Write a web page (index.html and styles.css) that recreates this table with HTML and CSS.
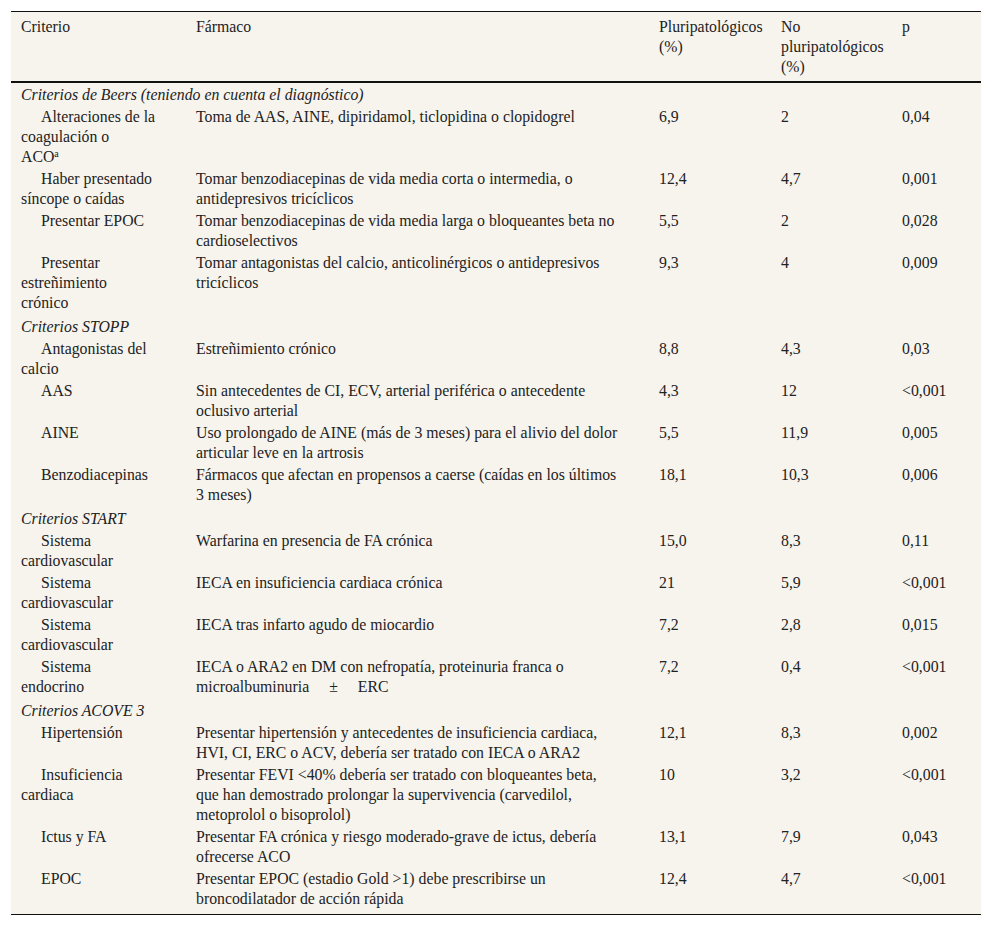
FILE: index.html
```
<!DOCTYPE html>
<html lang="es">
<head>
<meta charset="utf-8">
<title>Tabla</title>
<link rel="stylesheet" href="styles.css">
</head>
<body>
<table class="tbl">
<colgroup>
<col class="c1"><col class="c2"><col class="c3"><col class="c4"><col class="c5">
</colgroup>
<thead>
<tr><th>Criterio</th><th>Fármaco</th><th>Pluripatológicos<br>(%)</th><th>No<br>pluripatológicos<br>(%)</th><th>p</th></tr>
</thead>
<tbody>
<tr class="sec first"><td colspan="5">Criterios de Beers (teniendo en cuenta el diagnóstico)</td></tr>
<tr><td class="ind">Alteraciones de la<br>coagulación o<br>ACO<sup>a</sup></td><td>Toma de AAS, AINE, dipiridamol, ticlopidina o clopidogrel</td><td>6,9</td><td>2</td><td>0,04</td></tr>
<tr><td class="ind">Haber presentado<br>síncope o caídas</td><td>Tomar benzodiacepinas de vida media corta o intermedia, o<br>antidepresivos tricíclicos</td><td>12,4</td><td>4,7</td><td>0,001</td></tr>
<tr><td class="ind">Presentar EPOC</td><td>Tomar benzodiacepinas de vida media larga o bloqueantes beta no<br>cardioselectivos</td><td>5,5</td><td>2</td><td>0,028</td></tr>
<tr><td class="ind">Presentar<br>estreñimiento<br>crónico</td><td>Tomar antagonistas del calcio, anticolinérgicos o antidepresivos<br>tricíclicos</td><td>9,3</td><td>4</td><td>0,009</td></tr>
<tr class="sec"><td colspan="5">Criterios STOPP</td></tr>
<tr><td class="ind">Antagonistas del<br>calcio</td><td>Estreñimiento crónico</td><td>8,8</td><td>4,3</td><td>0,03</td></tr>
<tr><td class="ind">AAS</td><td>Sin antecedentes de CI, ECV, arterial periférica o antecedente<br>oclusivo arterial</td><td>4,3</td><td>12</td><td>&lt;0,001</td></tr>
<tr><td class="ind">AINE</td><td>Uso prolongado de AINE (más de 3 meses) para el alivio del dolor<br>articular leve en la artrosis</td><td>5,5</td><td>11,9</td><td>0,005</td></tr>
<tr><td class="ind">Benzodiacepinas</td><td><span class="nw">Fármacos que afectan en propensos a caerse (caídas en los últimos</span><br>3 meses)</td><td>18,1</td><td>10,3</td><td>0,006</td></tr>
<tr class="sec"><td colspan="5">Criterios START</td></tr>
<tr><td class="ind">Sistema<br>cardiovascular</td><td>Warfarina en presencia de FA crónica</td><td>15,0</td><td>8,3</td><td>0,11</td></tr>
<tr><td class="ind">Sistema<br>cardiovascular</td><td>IECA en insuficiencia cardiaca crónica</td><td>21</td><td>5,9</td><td>&lt;0,001</td></tr>
<tr><td class="ind">Sistema<br>cardiovascular</td><td>IECA tras infarto agudo de miocardio</td><td>7,2</td><td>2,8</td><td>0,015</td></tr>
<tr><td class="ind">Sistema<br>endocrino</td><td>IECA o ARA2 en DM con nefropatía, proteinuria franca o<br>microalbuminuria<span class="pm">±</span>ERC</td><td>7,2</td><td>0,4</td><td>&lt;0,001</td></tr>
<tr class="sec"><td colspan="5">Criterios ACOVE 3</td></tr>
<tr><td class="ind">Hipertensión</td><td>Presentar hipertensión y antecedentes de insuficiencia cardiaca,<br>HVI, CI, ERC o ACV, debería ser tratado con IECA o ARA2</td><td>12,1</td><td>8,3</td><td>0,002</td></tr>
<tr><td class="ind">Insuficiencia<br>cardiaca</td><td>Presentar FEVI &lt;40% debería ser tratado con bloqueantes beta,<br>que han demostrado prolongar la supervivencia (carvedilol,<br>metoprolol o bisoprolol)</td><td>10</td><td>3,2</td><td>&lt;0,001</td></tr>
<tr><td class="ind">Ictus y FA</td><td>Presentar FA crónica y riesgo moderado-grave de ictus, debería<br>ofrecerse ACO</td><td>13,1</td><td>7,9</td><td>0,043</td></tr>
<tr class="last"><td class="ind">EPOC</td><td>Presentar EPOC (estadio Gold &gt;1) debe prescribirse un<br>broncodilatador de acción rápida</td><td>12,4</td><td>4,7</td><td>&lt;0,001</td></tr>
</tbody>
</table>
</body>
</html>
```
FILE: styles.css
```
html, body {
  margin: 0;
  padding: 0;
  background: #ffffff;
}
body {
  padding: 11px 11px 0 11px;
  font-family: "Liberation Serif", "Times New Roman", serif;
  font-size: 15.8px;
  line-height: 20px;
  color: #222;
}
.tbl {
  width: 970px;
  table-layout: fixed;
  border-collapse: collapse;
  background: #f7f4ee;
  border-top: 1px solid #111;
  border-bottom: 1px solid #111;
}
.c1 { width: 175px; }
.c2 { width: 463px; }
.c3 { width: 122px; }
.c4 { width: 121px; }
.c5 { width: 89px; }
.tbl th {
  font-weight: normal;
  text-align: left;
  vertical-align: top;
  white-space: nowrap;
  padding: 5px 10px 4px 10px;
  border-bottom: 2px solid #111;
}
.tbl td {
  vertical-align: top;
  padding: 1px 10px 1px 10px;
}
.tbl .sec td {
  font-style: italic;
  padding-top: 3px;
}
.tbl .sec.first td { padding-top: 2px; }
.tbl td.ind { text-indent: 20px; }
.tbl tr.last td { padding-bottom: 5px; }
.nw { white-space: nowrap; }
sup {
  font-size: 10px;
  line-height: 0;
  vertical-align: 5px;
}
.pm {
  padding: 0 20px;
}
```
